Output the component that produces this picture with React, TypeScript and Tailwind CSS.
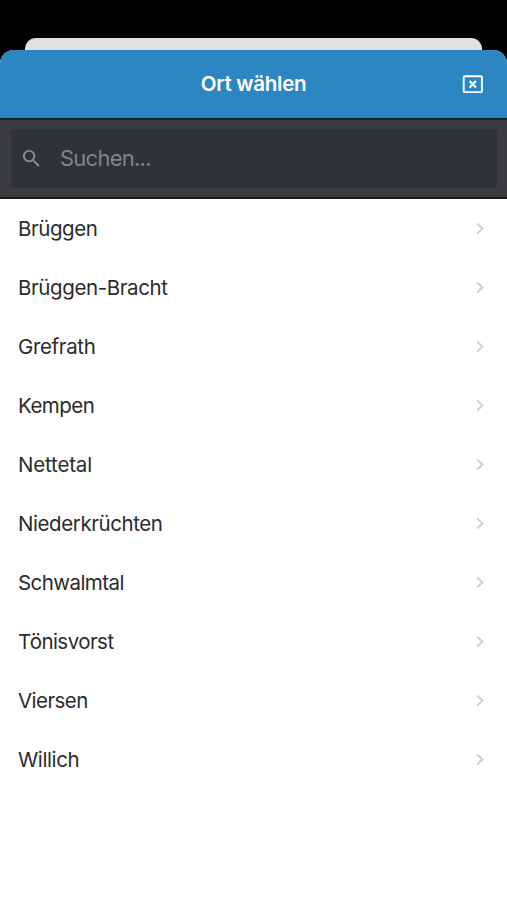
import { MdSearch } from "react-icons/md";

const places = [
  { name: "Brüggen", spacing: "tracking-[-0.44px]" },
  { name: "Brüggen-Bracht", spacing: "tracking-[-0.39px]" },
  { name: "Grefrath", spacing: "tracking-[-0.36px]" },
  { name: "Kempen", spacing: "tracking-[-0.53px]" },
  { name: "Nettetal", spacing: "tracking-[-0.17px]" },
  { name: "Niederkrüchten", spacing: "tracking-[-0.42px]" },
  { name: "Schwalmtal", spacing: "tracking-[-0.57px]" },
  { name: "Tönisvorst", spacing: "tracking-[-0.55px]" },
  { name: "Viersen", spacing: "tracking-[-0.55px]" },
  { name: "Willich", spacing: "tracking-[-0.38px]" },
];

const CloseIcon = () => (
  <svg width="22" height="19" viewBox="0 0 22 19" fill="none" stroke="currentColor">
    <rect x="1.7" y="1.3" width="18.2" height="15.8" rx="0.8" strokeWidth="1.9" />
    <path d="M7.6 6l6.4 6.4M14 6l-6.4 6.4" strokeWidth="2.1" />
  </svg>
);

const Chevron = () => (
  <svg width="8" height="12" viewBox="0 0 8 12" fill="none" stroke="#cfcfd1" strokeWidth="1.9">
    <path d="M1.2 0.5L6.4 5.5L1.2 10.5" />
  </svg>
);

const App = () => {
  return (
    <div className="flex h-[900px] w-[507px] flex-col overflow-hidden bg-black pt-[38px] font-['Inter',sans-serif]">
      <div className="mr-[25px] ml-[25px] h-[24px] shrink-0 rounded-t-[11px] bg-[#e0e0e0]" />
      <div className="relative -mt-3 flex flex-1 flex-col overflow-hidden rounded-t-[14px] bg-white">
        <header className="grid h-[70px] shrink-0 grid-cols-[1fr_auto_1fr] items-center border-b-2 border-[#15232c] bg-[#2c86c1] text-white">
          <h1 className="col-start-2 pt-px text-[20.5px] font-semibold tracking-[-0.25px]">Ort wählen</h1>
          <button className="mr-[23px] justify-self-end" aria-label="Schließen">
            <CloseIcon />
          </button>
        </header>
        <div className="h-[79px] shrink-0 border-b-2 border-[#1b1c1e] bg-[#3a3c3f] pt-[9px] pr-[10px] pl-[11px]">
          <label className="flex h-[59px] items-center rounded-[3px] bg-[#2f3336] text-[#8a8f98]">
            <MdSearch className="ml-[9px] h-[23px] w-[23px] shrink-0" />
            <input
              className="ml-[17px] w-full bg-transparent text-[22px] tracking-[-0.75px] outline-none placeholder:text-[#7f848c]"
              placeholder="Suchen..."
            />
          </label>
        </div>
        <ul>
          {places.map((place) => (
            <li key={place.name} className="flex h-[59px] items-center justify-between pr-[23px] pl-[18px]">
              <span className={`pt-0.5 text-[20.5px] text-[#2b2b2b] ${place.spacing}`}>{place.name}</span>
              <Chevron />
            </li>
          ))}
        </ul>
      </div>
    </div>
  );
};

export default App;
